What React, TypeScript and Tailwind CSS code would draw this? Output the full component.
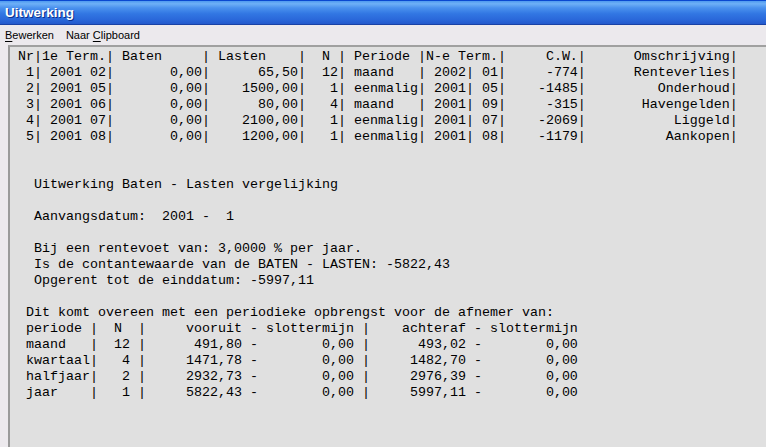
import React from "react";

const p = (s: string, n: number) => s.padStart(n);
const e = (s: string, n: number) => s.padEnd(n);

const topRows: string[][] = [
  ["1", "2001 02", "0,00", "65,50", "12", "maand", "2002", "01", "-774", "Renteverlies"],
  ["2", "2001 05", "0,00", "1500,00", "1", "eenmalig", "2001", "05", "-1485", "Onderhoud"],
  ["3", "2001 06", "0,00", "80,00", "4", "maand", "2001", "09", "-315", "Havengelden"],
  ["4", "2001 07", "0,00", "2100,00", "1", "eenmalig", "2001", "07", "-2069", "Liggeld"],
  ["5", "2001 08", "0,00", "1200,00", "1", "eenmalig", "2001", "08", "-1179", "Aankopen"],
];

const header =
  "Nr|1e Term.|" +
  " Baten     |" +
  " Lasten    |" +
  "  N |" +
  " Periode |" +
  "N-e Term.|" +
  "     C.W.|" +
  "      Omschrijving|";

const rowLine = (r: string[]) =>
  p(r[0], 2) +
  "|" +
  " " +
  r[1] +
  "|" +
  p(r[2], 11) +
  "|" +
  p(r[3], 11) +
  "|" +
  p(r[4], 4) +
  "|" +
  " " +
  e(r[5], 8) +
  "|" +
  " " +
  r[6] +
  "| " +
  r[7] +
  "|" +
  p(r[8], 9) +
  "|" +
  p(r[9], 18) +
  "|";

const lowRows: string[][] = [
  ["maand", "12", "491,80", "0,00", "493,02", "0,00"],
  ["kwartaal", "4", "1471,78", "0,00", "1482,70", "0,00"],
  ["halfjaar", "2", "2932,73", "0,00", "2976,39", "0,00"],
  ["jaar", "1", "5822,43", "0,00", "5997,11", "0,00"],
];

const lowHeader =
  " periode |  N  |" +
  p("vooruit", 12) +
  " -" +
  p("slottermijn", 12) +
  " |" +
  p("achteraf", 12) +
  " -" +
  p("slottermijn", 12);

const lowLine = (r: string[]) =>
  " " +
  e(r[0], 8) +
  "|" +
  p(r[1], 4) +
  " |" +
  p(r[2], 12) +
  " -" +
  p(r[3], 12) +
  " |" +
  p(r[4], 12) +
  " -" +
  p(r[5], 12);

const lines: string[] = [
  header,
  ...topRows.map(rowLine),
  "",
  "",
  "  Uitwerking Baten - Lasten vergelijking",
  "",
  "  Aanvangsdatum:  2001 -  1",
  "",
  "  Bij een rentevoet van: 3,0000 % per jaar.",
  "  Is de contantewaarde van de BATEN - LASTEN: -5822,43",
  "  Opgerent tot de einddatum: -5997,11",
  "",
  " Dit komt overeen met een periodieke opbrengst voor de afnemer van:",
  lowHeader,
  ...lowRows.map(lowLine),
];

export default function App() {
  return (
    <div className="w-[766px] h-[447px] overflow-hidden flex flex-col bg-[#ece9ed]">
      <div className="h-[25px] shrink-0 flex items-center pl-[5px] border-t border-b border-t-[#0a48d0] border-b-[#1941a5] bg-[linear-gradient(to_bottom,#4f9af0_0%,#6eb0f7_12%,#4a91ee_30%,#3277e3_55%,#2a68da_80%,#2359cc_100%)]">
        <span
          className="text-white font-bold text-[13.5px] leading-none [text-shadow:1px_1px_0_#0b2f8a]"
          style={{ fontFamily: '"Liberation Sans", Arial, sans-serif' }}
        >
          Uitwerking
        </span>
      </div>
      <div
        className="h-[20px] shrink-0 flex items-center gap-[12px] pl-[5px] pt-[1px] text-[11px] text-black bg-[#ece9ed]"
        style={{ fontFamily: '"Liberation Sans", Arial, sans-serif' }}
      >
        <span>
          <span className="underline underline-offset-[2px]">B</span>ewerken
        </span>
        <span>
          Naar <span className="underline underline-offset-[2px]">C</span>lipboard
        </span>
      </div>
      <div className="flex-1 ml-[8px] border-t-2 border-l-2 border-t-[#a0a0a0] border-l-[#9a9a9a] bg-[#e0e0e0] overflow-hidden">
        <pre
          className="m-0 pl-[8px] pt-[2px] text-[13.333px] leading-[16px] text-black whitespace-pre"
          style={{ fontFamily: '"Liberation Mono", "Courier New", monospace' }}
        >
          {lines.join("\n")}
        </pre>
      </div>
    </div>
  );
}
